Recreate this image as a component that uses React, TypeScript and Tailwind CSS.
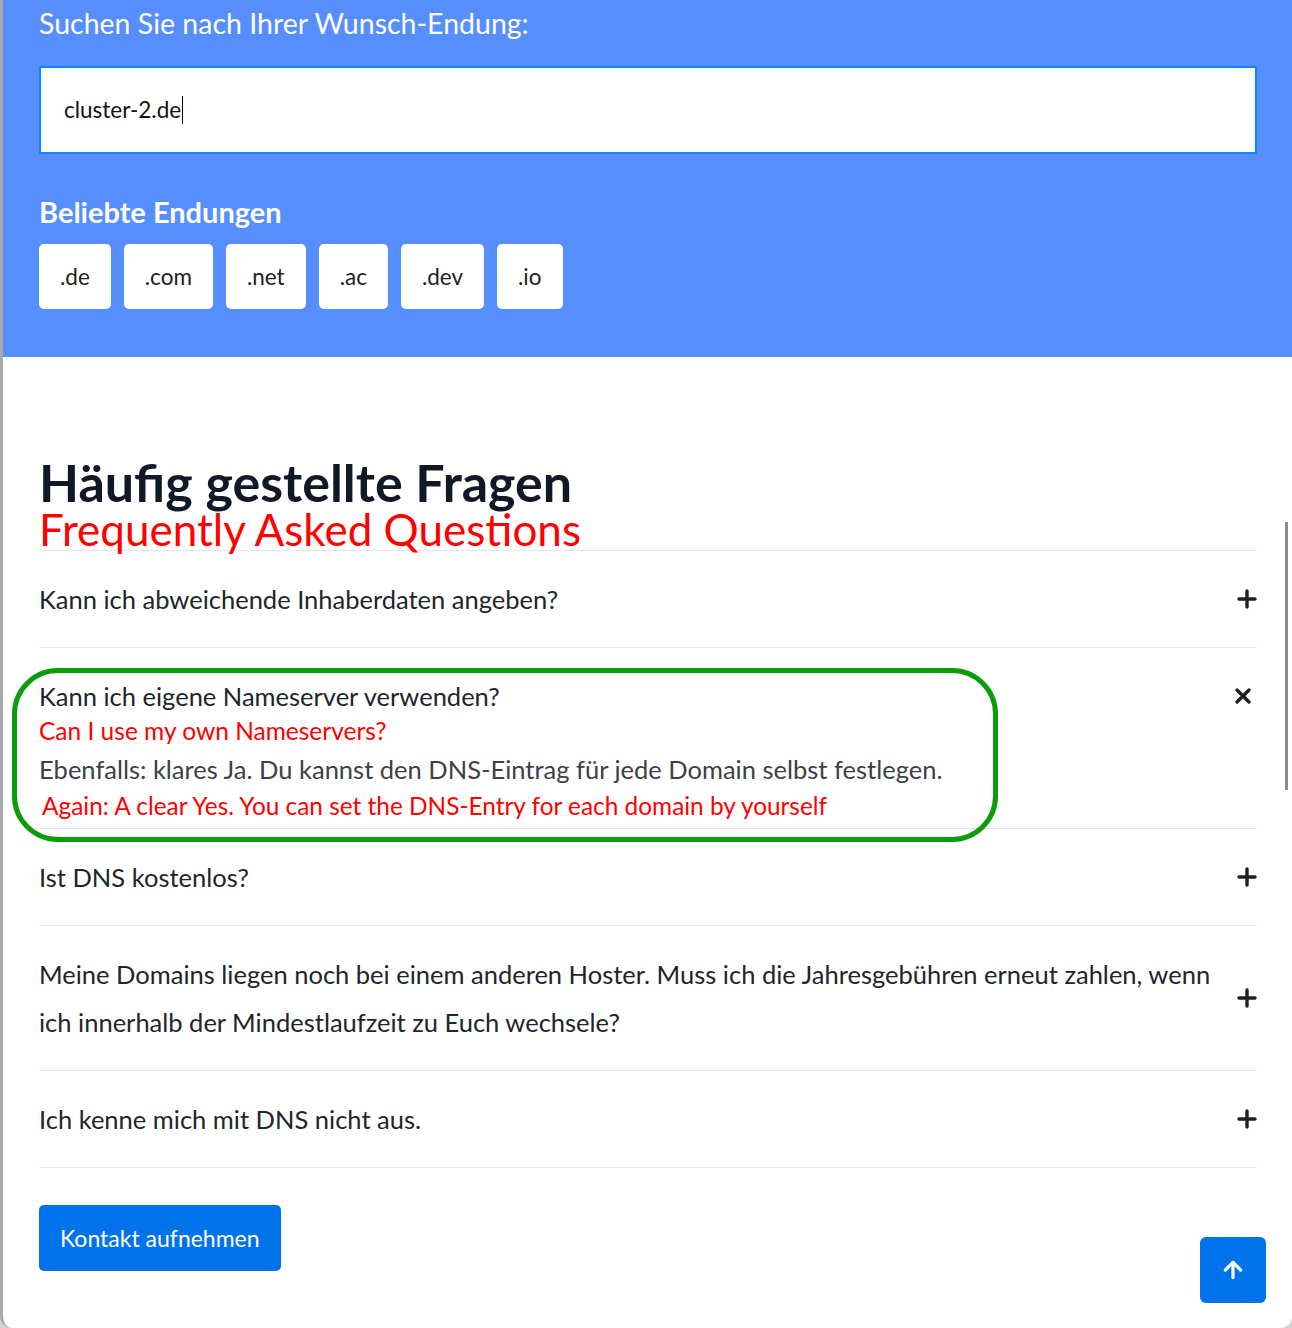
import { ArrowUp } from "lucide-react";

const endings = [".de", ".com", ".net", ".ac", ".dev", ".io"];

const faqs = [
  { q: "Kann ich abweichende Inhaberdaten angeben?" },
  {
    q: "Kann ich eigene Nameserver verwenden?",
    open: true,
  },
  { q: "Ist DNS kostenlos?" },
  {
    q: "Meine Domains liegen noch bei einem anderen Hoster. Muss ich die Jahresgebühren erneut zahlen, wenn ich innerhalb der Mindestlaufzeit zu Euch wechsele?",
  },
  { q: "Ich kenne mich mit DNS nicht aus." },
];

function PlusIcon() {
  return (
    <svg width="20" height="20" viewBox="0 0 20 20" className="shrink-0">
      <path d="M10 2v16M2 10h16" stroke="#1f1f1f" strokeWidth="3.4" strokeLinecap="round" />
    </svg>
  );
}

function CloseIcon() {
  return (
    <svg width="18" height="18" viewBox="0 0 18 18" className="shrink-0">
      <path d="M3 3l12 12M15 3L3 15" stroke="#1f1f1f" strokeWidth="3.4" strokeLinecap="round" />
    </svg>
  );
}

export default function App() {
  return (
    <div className="bg-[#d4d4d4] font-['Lato','Liberation_Sans',sans-serif]">
      <div className="relative h-[1328px] overflow-hidden rounded-b-[12px] border-l-[3px] border-[#a9a9a9] bg-white">
        {/* search header */}
        <section className="bg-[#578efe] pl-[36px] pr-[35px] pt-[5px] pb-[48px]">
          <h2 className="text-[28.5px] leading-[36px] text-white">Suchen Sie nach Ihrer Wunsch-Endung:</h2>
          <div className="mt-[25px] flex h-[88px] items-center border-2 border-[#0a86ff] bg-white pl-[23px]">
            <span className="text-[22.5px] text-[#111]">cluster-2.de</span>
            <span className="ml-px h-[28px] w-px bg-black" />
          </div>
          <h3 className="mt-[40px] text-[29px] font-bold leading-[36px] text-white">Beliebte Endungen</h3>
          <div className="mt-[14px] flex gap-[13px]">
            {endings.map((e) => (
              <div
                key={e}
                className="flex h-[65px] items-center rounded-[5px] bg-white px-[21px] text-[22.5px] text-[#222]"
              >
                {e}
              </div>
            ))}
          </div>
        </section>

        {/* faq */}
        <section className="pl-[36px] pr-[35px] pt-[98px]">
          <h2 className="text-[52px] font-bold leading-[54px] text-[#111827]">Häufig gestellte Fragen</h2>
          <p className="text-[44px] leading-[41px] text-[#ff0000]">Frequently Asked Questions</p>

          <div className="border-t border-[#e6e6e6]">
            {faqs.map((f, i) =>
              f.open ? (
                <div key={i} className="relative border-b border-[#e6e6e6] pt-[24px] pb-[7px]">
                  <div className="flex items-center justify-between">
                    <span className="text-[25.5px] leading-[48px] text-[#212529]">{f.q}</span>
                    <span className="mr-[5px]">
                      <CloseIcon />
                    </span>
                  </div>
                  <p className="text-[24.5px] leading-[22px] text-[#ff0000]">Can I use my own Nameservers?</p>
                  <p className="mt-[12px] text-[25.5px] leading-[30px] text-[#3d4046]">
                    Ebenfalls: klares Ja. Du kannst den DNS-Eintrag für jede Domain selbst festlegen.
                  </p>
                  <p className="mt-[7px] pl-[3px] text-[24.4px] leading-[30px] text-[#ff0000]">
                    Again: A clear Yes. You can set the DNS-Entry for each domain by yourself
                  </p>
                  <div className="pointer-events-none absolute left-[-27px] top-[20px] h-[174px] w-[986px] rounded-[46px] border-[5px] border-[#0b9b0b]" />
                </div>
              ) : (
                <div key={i} className="flex items-center justify-between gap-4 border-b border-[#e6e6e6] py-[24px]">
                  <span className="text-[25.5px] leading-[48px] text-[#212529]">{f.q}</span>
                  <PlusIcon />
                </div>
              )
            )}
          </div>

          <div className="flex items-start justify-between pt-[37px]">
            <button className="h-[66px] rounded-[5px] bg-[#0073ea] px-[21px] text-[23px] text-white">
              Kontakt aufnehmen
            </button>
            <button className="mr-[-9px] mt-[32px] flex h-[66px] w-[66px] items-center justify-center rounded-[6px] bg-[#0073ea]">
              <ArrowUp size={26} color="white" strokeWidth={3} />
            </button>
          </div>
        </section>

        {/* scrollbar thumb */}
        <div className="absolute right-[4px] top-[522px] h-[268px] w-[3px] bg-[#8c8c8c]" />
      </div>
    </div>
  );
}
